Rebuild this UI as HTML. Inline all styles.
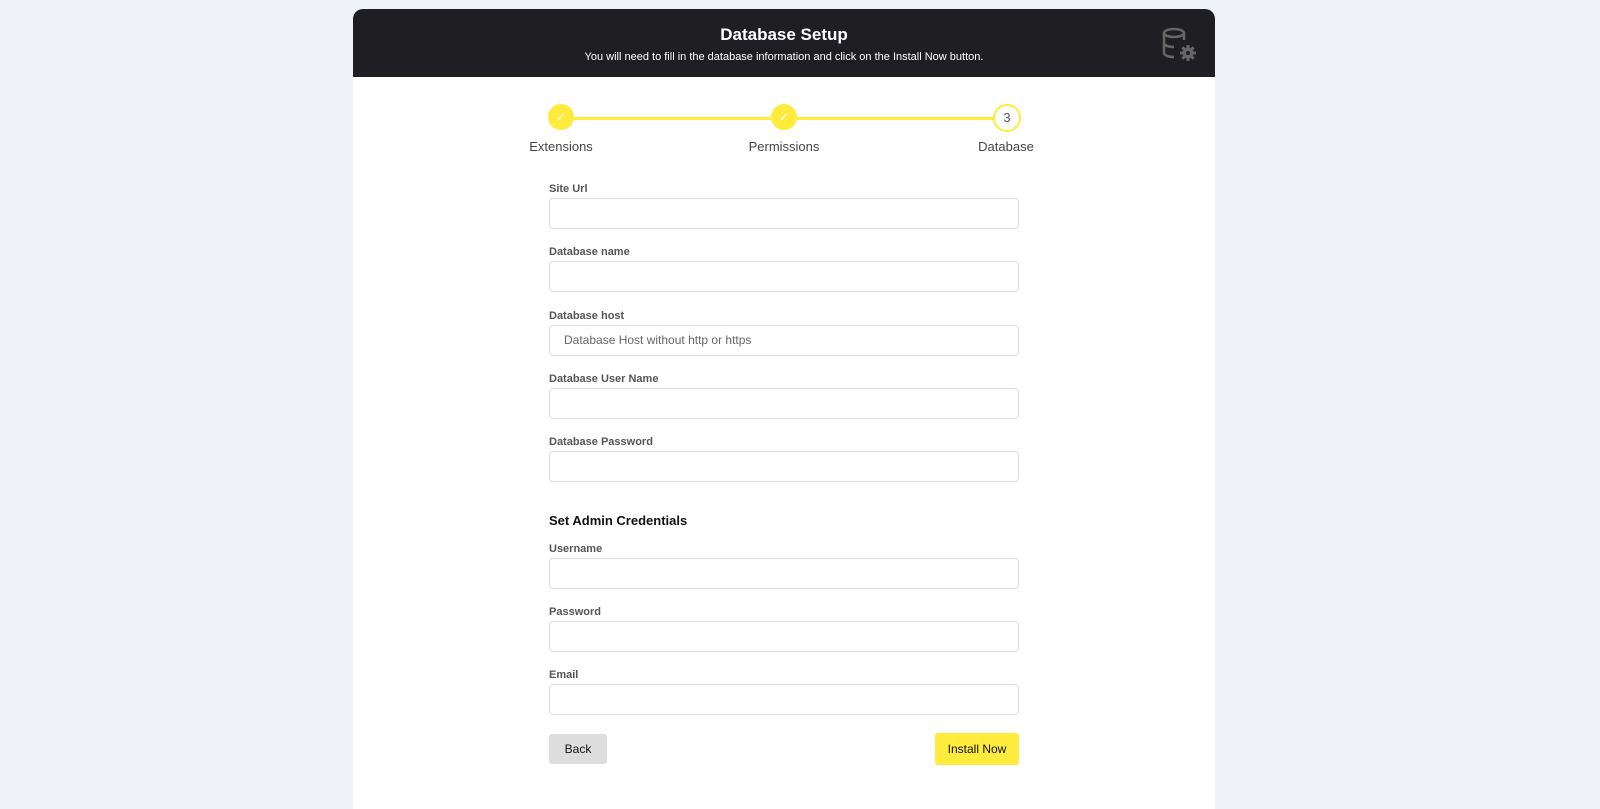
<!DOCTYPE html>
<html><head><style>
body{margin:0;background:#eff3f8;font-family:"Liberation Sans",sans-serif;}
.card{position:absolute;left:353px;top:9px;width:862px;height:800px;background:#fff;border-radius:10px 10px 0 0;overflow:hidden}
.hdr{height:68px;background:#1f1f23;color:#fff;text-align:center;position:relative}
.hdr h1{margin:0;padding-top:16px;font-size:17px;font-weight:bold;line-height:20px}
.hdr p{margin:6px 0 0;font-size:11px}
.ic{position:absolute;left:808px;top:17px}
.line{position:absolute;top:108px;height:3px;background:#ffeb3b}
.c{position:absolute;top:95px;width:26px;height:26px;border-radius:50%;background:#ffeb3b;color:#fff;text-align:center;line-height:26px;font-size:12px}
.c3{background:#fff;border:2px solid #ffeb3b;width:24px;height:24px;line-height:24px;color:#555;font-size:13px}
.sl{position:absolute;top:130px;font-size:13px;color:#444;width:120px;text-align:center}
.f{position:absolute;left:196px;width:470px}
.f label{display:block;font-size:11px;font-weight:bold;color:#555;height:15px}
.f .in{height:29px;border:1px solid #ddd;border-radius:4px;font-size:12px;color:#666;line-height:29px;padding-left:14px;box-sizing:content-box;width:454px}
h3{position:absolute;left:196px;top:504px;margin:0;font-size:13px;color:#111}
.btn{position:absolute;font-size:12px;text-align:center;border-radius:3px;color:#111}
</style></head><body>
<div class="card">
<div class="hdr"><h1>Database Setup</h1><p>You will need to fill in the database information and click on the Install Now button.</p>
<svg class="ic" width="36" height="36" viewBox="0 0 36 36" fill="none" stroke="#666" stroke-width="2.6"><ellipse cx="13" cy="7" rx="10" ry="4"/><path d="M3 7v20c0 2 4 4 10 4M23 7v7M3 17c0 2 4 4 10 4"/><g fill="#666" stroke="none"><circle cx="27" cy="27" r="5.5"/><rect x="25.5" y="19" width="3" height="16"/><rect x="19" y="25.5" width="16" height="3"/><rect x="25.5" y="19" width="3" height="16" transform="rotate(45 27 27)"/><rect x="25.5" y="19" width="3" height="16" transform="rotate(-45 27 27)"/></g><circle cx="27" cy="27" r="2" fill="#1f1f23" stroke="none"/></svg></div>
<div class="line" style="left:208px;width:445px"></div>
<div class="c" style="left:195px">✓</div><div class="c" style="left:418px">✓</div><div class="c c3" style="left:640px">3</div>
<div class="sl" style="left:148px">Extensions</div><div class="sl" style="left:371px">Permissions</div><div class="sl" style="left:593px">Database</div>
<div class="f" style="top:174px"><label>Site Url</label><div class="in"></div></div>
<div class="f" style="top:237px"><label>Database name</label><div class="in"></div></div>
<div class="f" style="top:301px"><label>Database host</label><div class="in">Database Host without http or https</div></div>
<div class="f" style="top:364px"><label>Database User Name</label><div class="in"></div></div>
<div class="f" style="top:427px"><label>Database Password</label><div class="in"></div></div>
<h3>Set Admin Credentials</h3>
<div class="f" style="top:534px"><label>Username</label><div class="in"></div></div>
<div class="f" style="top:597px"><label>Password</label><div class="in"></div></div>
<div class="f" style="top:660px"><label>Email</label><div class="in"></div></div>
<div class="btn" style="left:196px;top:725px;width:58px;height:30px;line-height:30px;background:#ddd">Back</div>
<div class="btn" style="left:582px;top:724px;width:84px;height:32px;line-height:32px;background:#ffeb3b">Install Now</div>
</div>
</body></html>
